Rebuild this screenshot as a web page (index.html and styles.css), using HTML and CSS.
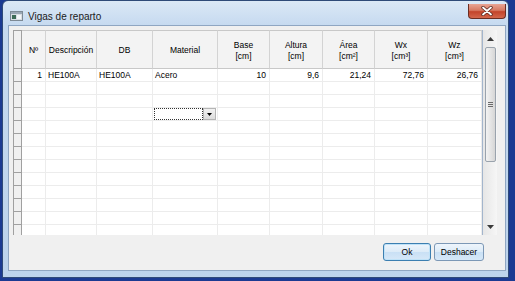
FILE: index.html
```html
<!DOCTYPE html>
<html>
<head>
<meta charset="utf-8">
<link rel="stylesheet" href="styles.css">
</head>
<body>
<div class="window">
  <div class="titlebar">
    <svg class="app-icon" width="13" height="10" viewBox="0 0 13 10">
      <rect x="0.5" y="0.5" width="12" height="9" fill="#d8dde3" stroke="#7d8a96"/>
      <rect x="1" y="1" width="11" height="2" fill="#9aa7b4"/>
      <rect x="2" y="4" width="4" height="4" fill="#3d6b57"/>
      <rect x="7" y="4" width="4" height="4" fill="#f4f6f8"/>
    </svg>
    <span class="title">Vigas de reparto</span>
    <div class="close-btn">
      <svg width="14" height="10" viewBox="0 0 14 10">
        <path d="M3 1.5 L11 8.5 M11 1.5 L3 8.5" stroke="#5a2a22" stroke-width="3.4" stroke-linecap="round"/>
        <path d="M3 1.5 L11 8.5 M11 1.5 L3 8.5" stroke="#ffffff" stroke-width="1.8" stroke-linecap="round"/>
      </svg>
    </div>
  </div>
  <div class="client">
    <div class="datagrid">
      <div class="cells">
        <div class="rh corner"></div>
        <div class="hc">Nº</div>
        <div class="hc">Descripción</div>
        <div class="hc">DB</div>
        <div class="hc">Material</div>
        <div class="hc">Base<br>[cm]</div>
        <div class="hc">Altura<br>[cm]</div>
        <div class="hc">Área<br>[cm²]</div>
        <div class="hc">Wx<br>[cm³]</div>
        <div class="hc">Wz<br>[cm³]</div>

        <div class="rh"></div>
        <div class="dc r">1</div>
        <div class="dc">HE100A</div>
        <div class="dc">HE100A</div>
        <div class="dc">Acero</div>
        <div class="dc r">10</div>
        <div class="dc r">9,6</div>
        <div class="dc r">21,24</div>
        <div class="dc r">72,76</div>
        <div class="dc r">26,76</div>

        <div class="rh"></div><div class="dc"></div><div class="dc"></div><div class="dc"></div><div class="dc"></div><div class="dc"></div><div class="dc"></div><div class="dc"></div><div class="dc"></div><div class="dc"></div>
        <div class="rh"></div><div class="dc"></div><div class="dc"></div><div class="dc"></div><div class="dc"></div><div class="dc"></div><div class="dc"></div><div class="dc"></div><div class="dc"></div><div class="dc"></div>
        <div class="rh"></div><div class="dc"></div><div class="dc"></div><div class="dc"></div>
        <div class="dc combo-cell"><div class="combo"><div class="combo-box"></div><div class="combo-btn"><svg width="5" height="3" viewBox="0 0 5 3"><path d="M0 0 H5 L2.5 3 Z" fill="#000"/></svg></div></div></div>
        <div class="dc"></div><div class="dc"></div><div class="dc"></div><div class="dc"></div><div class="dc"></div>
        <div class="rh"></div><div class="dc"></div><div class="dc"></div><div class="dc"></div><div class="dc"></div><div class="dc"></div><div class="dc"></div><div class="dc"></div><div class="dc"></div><div class="dc"></div>
        <div class="rh"></div><div class="dc"></div><div class="dc"></div><div class="dc"></div><div class="dc"></div><div class="dc"></div><div class="dc"></div><div class="dc"></div><div class="dc"></div><div class="dc"></div>
        <div class="rh"></div><div class="dc"></div><div class="dc"></div><div class="dc"></div><div class="dc"></div><div class="dc"></div><div class="dc"></div><div class="dc"></div><div class="dc"></div><div class="dc"></div>
        <div class="rh"></div><div class="dc"></div><div class="dc"></div><div class="dc"></div><div class="dc"></div><div class="dc"></div><div class="dc"></div><div class="dc"></div><div class="dc"></div><div class="dc"></div>
        <div class="rh"></div><div class="dc"></div><div class="dc"></div><div class="dc"></div><div class="dc"></div><div class="dc"></div><div class="dc"></div><div class="dc"></div><div class="dc"></div><div class="dc"></div>
        <div class="rh"></div><div class="dc"></div><div class="dc"></div><div class="dc"></div><div class="dc"></div><div class="dc"></div><div class="dc"></div><div class="dc"></div><div class="dc"></div><div class="dc"></div>
        <div class="rh"></div><div class="dc"></div><div class="dc"></div><div class="dc"></div><div class="dc"></div><div class="dc"></div><div class="dc"></div><div class="dc"></div><div class="dc"></div><div class="dc"></div>
        <div class="rh"></div><div class="dc"></div><div class="dc"></div><div class="dc"></div><div class="dc"></div><div class="dc"></div><div class="dc"></div><div class="dc"></div><div class="dc"></div><div class="dc"></div>
        <div class="rh"></div><div class="dc"></div><div class="dc"></div><div class="dc"></div><div class="dc"></div><div class="dc"></div><div class="dc"></div><div class="dc"></div><div class="dc"></div><div class="dc"></div>
      </div>
      <div class="vscroll">
        <div class="sb-arrow"><svg width="7" height="4" viewBox="0 0 7 4"><path d="M0 4 H7 L3.5 0 Z" fill="#3a3a3a"/></svg></div>
        <div class="sb-thumb"><div class="grip"></div></div>
        <div class="sb-track"></div>
        <div class="sb-arrow"><svg width="7" height="4" viewBox="0 0 7 4"><path d="M0 0 H7 L3.5 4 Z" fill="#3a3a3a"/></svg></div>
      </div>
    </div>
    <div class="buttons">
      <div class="btn default">Ok</div>
      <div class="btn">Deshacer</div>
    </div>
  </div>
</div>
</body>
</html>
```
FILE: styles.css
```css
* { box-sizing: border-box; }
html, body { margin: 0; padding: 0; }
body {
  width: 515px;
  height: 281px;
  background: #1b3a92;
  padding: 0 6px 3px 2px;
  font-family: "Liberation Sans", Arial, sans-serif;
  overflow: hidden;
}
.window {
  width: 507px;
  height: 278px;
  border: 1px solid #2f4a78;
  border-radius: 6px 6px 0 0;
  background: linear-gradient(to bottom, #dbe8f6 0px, #c6daf0 24px, #bcd3ec 100%);
  padding: 0 2px 6px 5px;
  display: flex;
  flex-direction: column;
}
.titlebar {
  height: 24px;
  display: flex;
  align-items: center;
  position: relative;
  padding-left: 2px;
}
.app-icon { display: block; margin-top: 5px; }
.title {
  font-size: 10px;
  color: #1a1a1a;
  margin-left: 5px;
  margin-top: 6px;
}
.close-btn {
  position: absolute;
  right: 0;
  top: 3px;
  width: 38px;
  height: 15px;
  border: 1px solid #6b2d22;
  border-top: none;
  border-radius: 0 0 4px 4px;
  background: linear-gradient(to bottom, #e9a594 0%, #d77a63 45%, #c3442b 55%, #d3674c 100%);
  display: flex;
  align-items: center;
  justify-content: center;
}
.close-btn svg { display: block; }
.client {
  flex: 1;
  border: 1px solid #8fa6c2;
  background: #f0f0f0;
  padding: 4px 8px 0 4px;
  display: flex;
  flex-direction: column;
}
.datagrid {
  height: 205px;
  display: flex;
  background: #fff;
}
.cells {
  width: 469px;
  height: 205px;
  overflow: hidden;
  display: grid;
  grid-template-columns: 9px 24px 51px 56px 65px 52px 53px 52px 53px 54px;
  grid-template-rows: 39px repeat(13, 13px);
  font-size: 8.5px;
  color: #000;
}
.rh {
  background: #f0f0f0;
  border-left: 1px solid #a0a0a0;
  border-right: 1px solid #a0a0a0;
  border-bottom: 1px solid #a0a0a0;
}
.rh.corner {
  border-top: 1px solid #a0a0a0;
  border-bottom: 1px solid #a0a0a0;
}
.hc {
  background: #f3f3f3;
  border-top: 1px solid #c8c8c8;
  border-right: 1px solid #d3d3d3;
  border-bottom: 1px solid #c8c8c8;
  display: flex;
  align-items: center;
  justify-content: center;
  text-align: center;
  line-height: 10.5px;
  padding-top: 2px;
}
.dc {
  border-right: 1px solid #ececec;
  border-bottom: 1px solid #ececec;
  line-height: 12px;
  padding: 0 2px;
  white-space: nowrap;
  overflow: hidden;
}
.dc.r { text-align: right; padding-right: 3px; }
.combo-cell { padding: 0; }
.combo {
  display: flex;
  height: 12px;
  margin-left: 1px;
  margin-right: 1px;
}
.combo-box {
  flex: 1;
  border: 1px dotted #333;
  background: #fff;
}
.combo-btn {
  width: 13px;
  background: linear-gradient(to bottom, #f2f2f2, #dcdcdc);
  border: 1px solid #b5b5b5;
  display: flex;
  align-items: center;
  justify-content: center;
}
.combo-btn svg { display: block; }
.vscroll {
  width: 15px;
  height: 205px;
  border-left: 1px solid #a3b5cc;
  background: linear-gradient(to right, #e6e6e6, #f6f6f6);
  display: flex;
  flex-direction: column;
  padding: 0 1px 0 2px;
}
.sb-arrow {
  height: 17px;
  display: flex;
  align-items: center;
  justify-content: center;
}
.sb-arrow svg { display: block; }
.sb-thumb {
  height: 115px;
  border: 1px solid #9aa3ad;
  border-radius: 2px;
  background: linear-gradient(to right, #f3f3f3, #e2e2e2 60%, #d6d6d6);
  display: flex;
  align-items: center;
  justify-content: center;
}
.grip {
  width: 5px;
  height: 5px;
  border-top: 1px solid #6b6b6b;
  border-bottom: 1px solid #6b6b6b;
  position: relative;
}
.grip::after {
  content: "";
  position: absolute;
  left: 0;
  right: 0;
  top: 1px;
  border-top: 1px solid #6b6b6b;
}
.sb-track { flex: 1; }
.buttons {
  margin-top: 8px;
  display: flex;
  justify-content: flex-end;
  gap: 3px;
  padding-right: 13px;
}
.btn {
  width: 50px;
  height: 18px;
  border: 1px solid #7c98b6;
  border-radius: 3px;
  background: linear-gradient(to bottom, #eef5fc 0%, #dcebf8 50%, #c9e0f5 51%, #d6e8f8 100%);
  font-size: 8.5px;
  display: flex;
  align-items: center;
  justify-content: center;
  color: #000;
}
.btn.default {
  width: 48px;
  border-color: #3c7fb1;
  box-shadow: inset 0 0 0 1px #bfe2f8;
}
```
